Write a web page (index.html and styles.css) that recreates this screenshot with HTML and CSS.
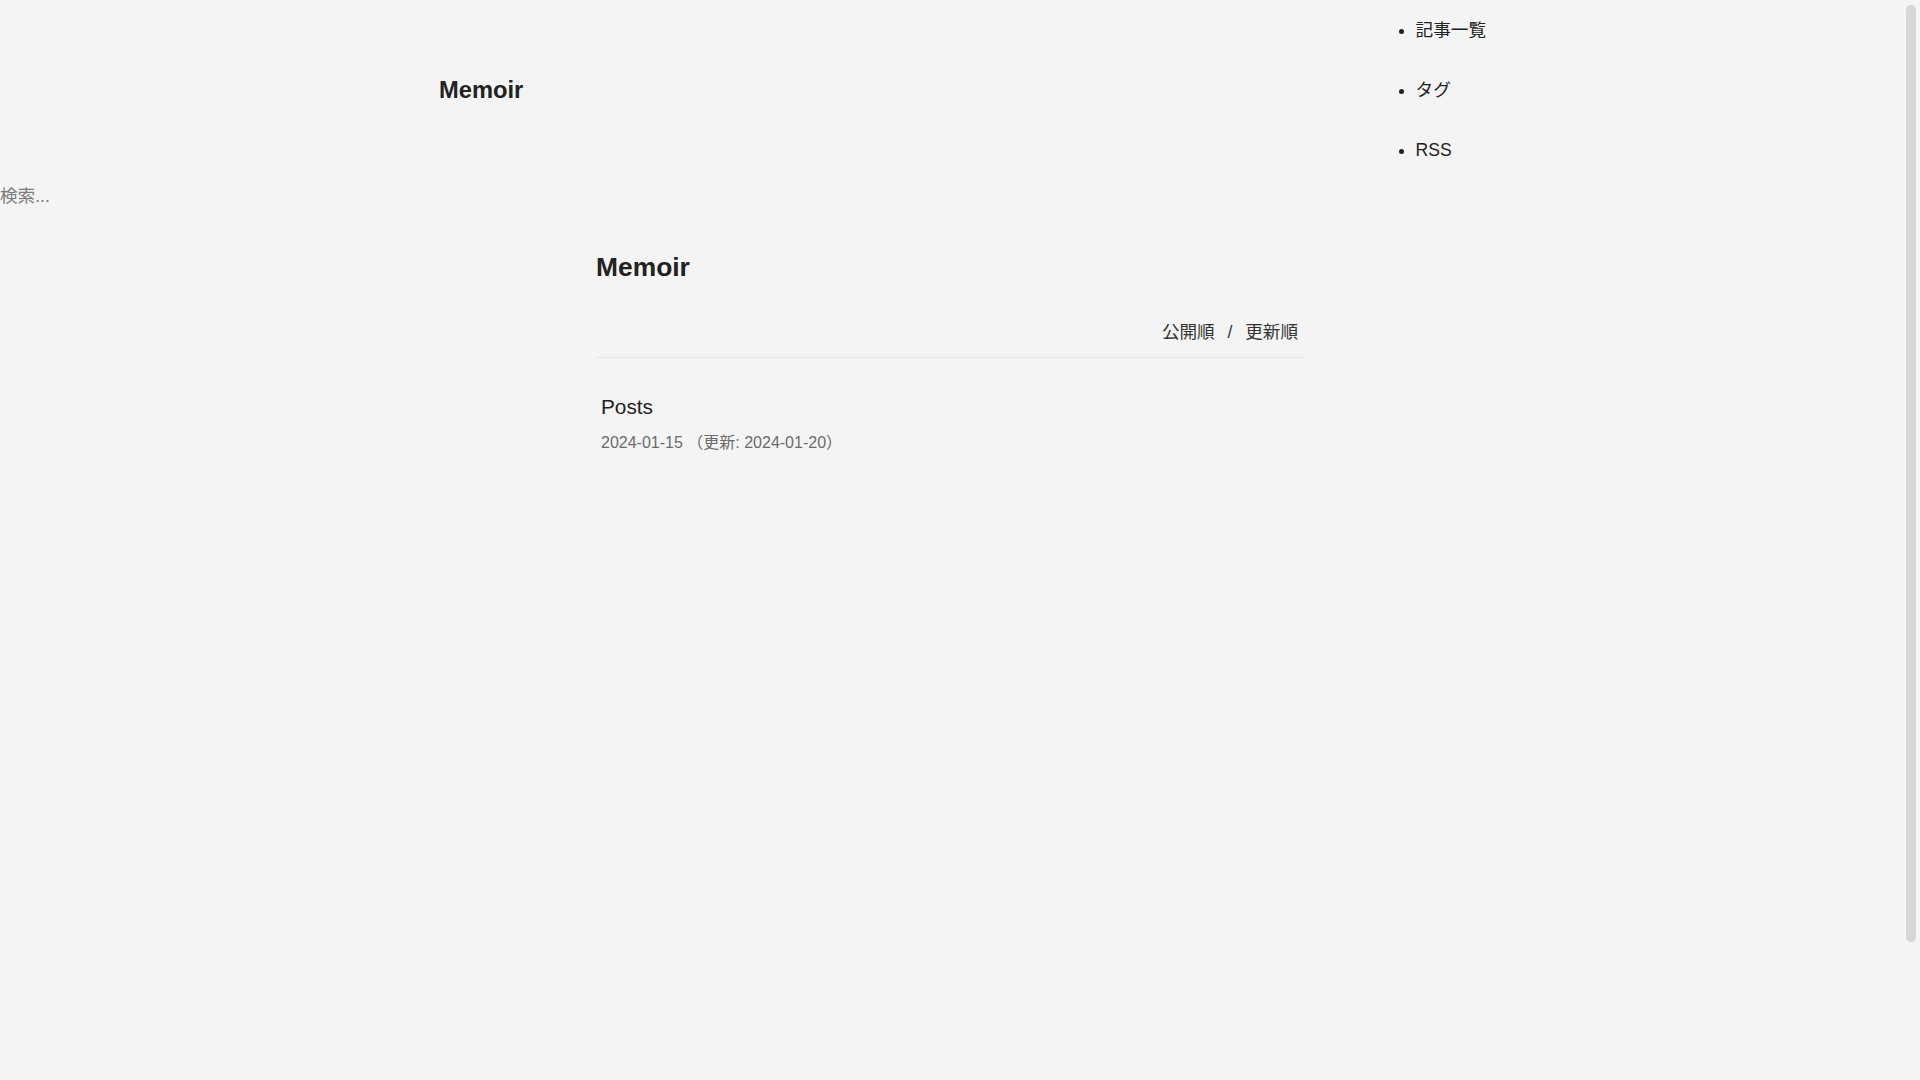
FILE: index.html
```html
<!DOCTYPE html>
<html lang="ja">
<head>
<meta charset="utf-8">
<title>Memoir</title>
<link rel="stylesheet" href="styles.css">
</head>
<body>
<header class="site-header">
  <a class="site-title" href="#">Memoir</a>
  <nav class="site-nav">
    <ul class="nav-list">
      <li class="nav-item"><a href="#">記事一覧</a></li>
      <li class="nav-item"><a href="#">タグ</a></li>
      <li class="nav-item"><a href="#">RSS</a></li>
    </ul>
  </nav>
</header>
<div class="search">
  <input class="search-input" type="text" placeholder="検索...">
</div>
<main class="content">
  <h1 class="page-title">Memoir</h1>
  <div class="sort">
    <a class="sort-link" href="#">公開順</a>
    <span class="sort-sep">/</span>
    <a class="sort-link" href="#">更新順</a>
  </div>
  <ul class="post-list">
    <li class="post">
      <a class="post-title" href="#">Posts</a>
      <div class="post-meta">2024-01-15 （更新: 2024-01-20）</div>
    </li>
  </ul>
</main>
<div class="scrollbar" aria-hidden="true"><div class="scrollbar-thumb"></div></div>
</body>
</html>
```
FILE: styles.css
```css
html {
  background: #f4f4f4;
  scrollbar-width: none;
}
html::-webkit-scrollbar {
  display: none;
}
body {
  margin: 0;
  padding-right: 18px;
  background: #f4f4f4;
  color: #222;
  font-family: "Liberation Sans", Arial, "Noto Sans CJK JP", sans-serif;
  font-size: 17.6px;
  line-height: 1.2;
  min-height: 1234px;
}
a {
  color: inherit;
  text-decoration: none;
}
.site-header {
  display: flex;
  align-items: center;
  justify-content: space-between;
  padding: 0 416px 0 439px;
}
.site-title {
  font-size: 23.7px;
  font-weight: bold;
  color: #222;
}
.nav-list {
  margin: 0;
  padding-left: 40px;
}
.nav-item {
  padding: 19.5px 0;
  line-height: 21px;
}
.search {
  height: 33px;
}
.search-input {
  display: block;
  border: 0;
  outline: none;
  background: transparent;
  padding: 0;
  margin: 0;
  height: 33px;
  width: 200px;
  font: inherit;
  font-size: 17.6px;
  color: #222;
}
.search-input::placeholder {
  color: #7a7a7a;
}
.content {
  max-width: 710px;
  margin: 0 auto;
}
.page-title {
  margin: 38.5px 0 0;
  font-size: 26.4px;
  font-weight: bold;
  color: #222;
  line-height: 1.2;
}
.sort {
  display: flex;
  justify-content: flex-end;
  align-items: center;
  margin-top: 39px;
  padding: 0 8px 14px 0;
  border-bottom: 1px solid #e6e6e6;
  color: #333;
}
.sort-sep {
  margin: 0 12.8px;
}
.post-list {
  list-style: none;
  margin: 0;
  padding: 0;
}
.post {
  padding: 37px 5px;
}
.post-title {
  display: block;
  font-size: 20.8px;
  color: #222;
}
.post-meta {
  margin-top: 12.5px;
  font-size: 16px;
  color: #6b6b6b;
}
.scrollbar {
  position: fixed;
  top: 0;
  right: 0;
  width: 18px;
  height: 100vh;
  background: #f4f4f4;
}
.scrollbar-thumb {
  position: absolute;
  top: 5px;
  left: 4px;
  width: 10px;
  height: 937px;
  border-radius: 5px;
  background: #d6d6d6;
}
```
